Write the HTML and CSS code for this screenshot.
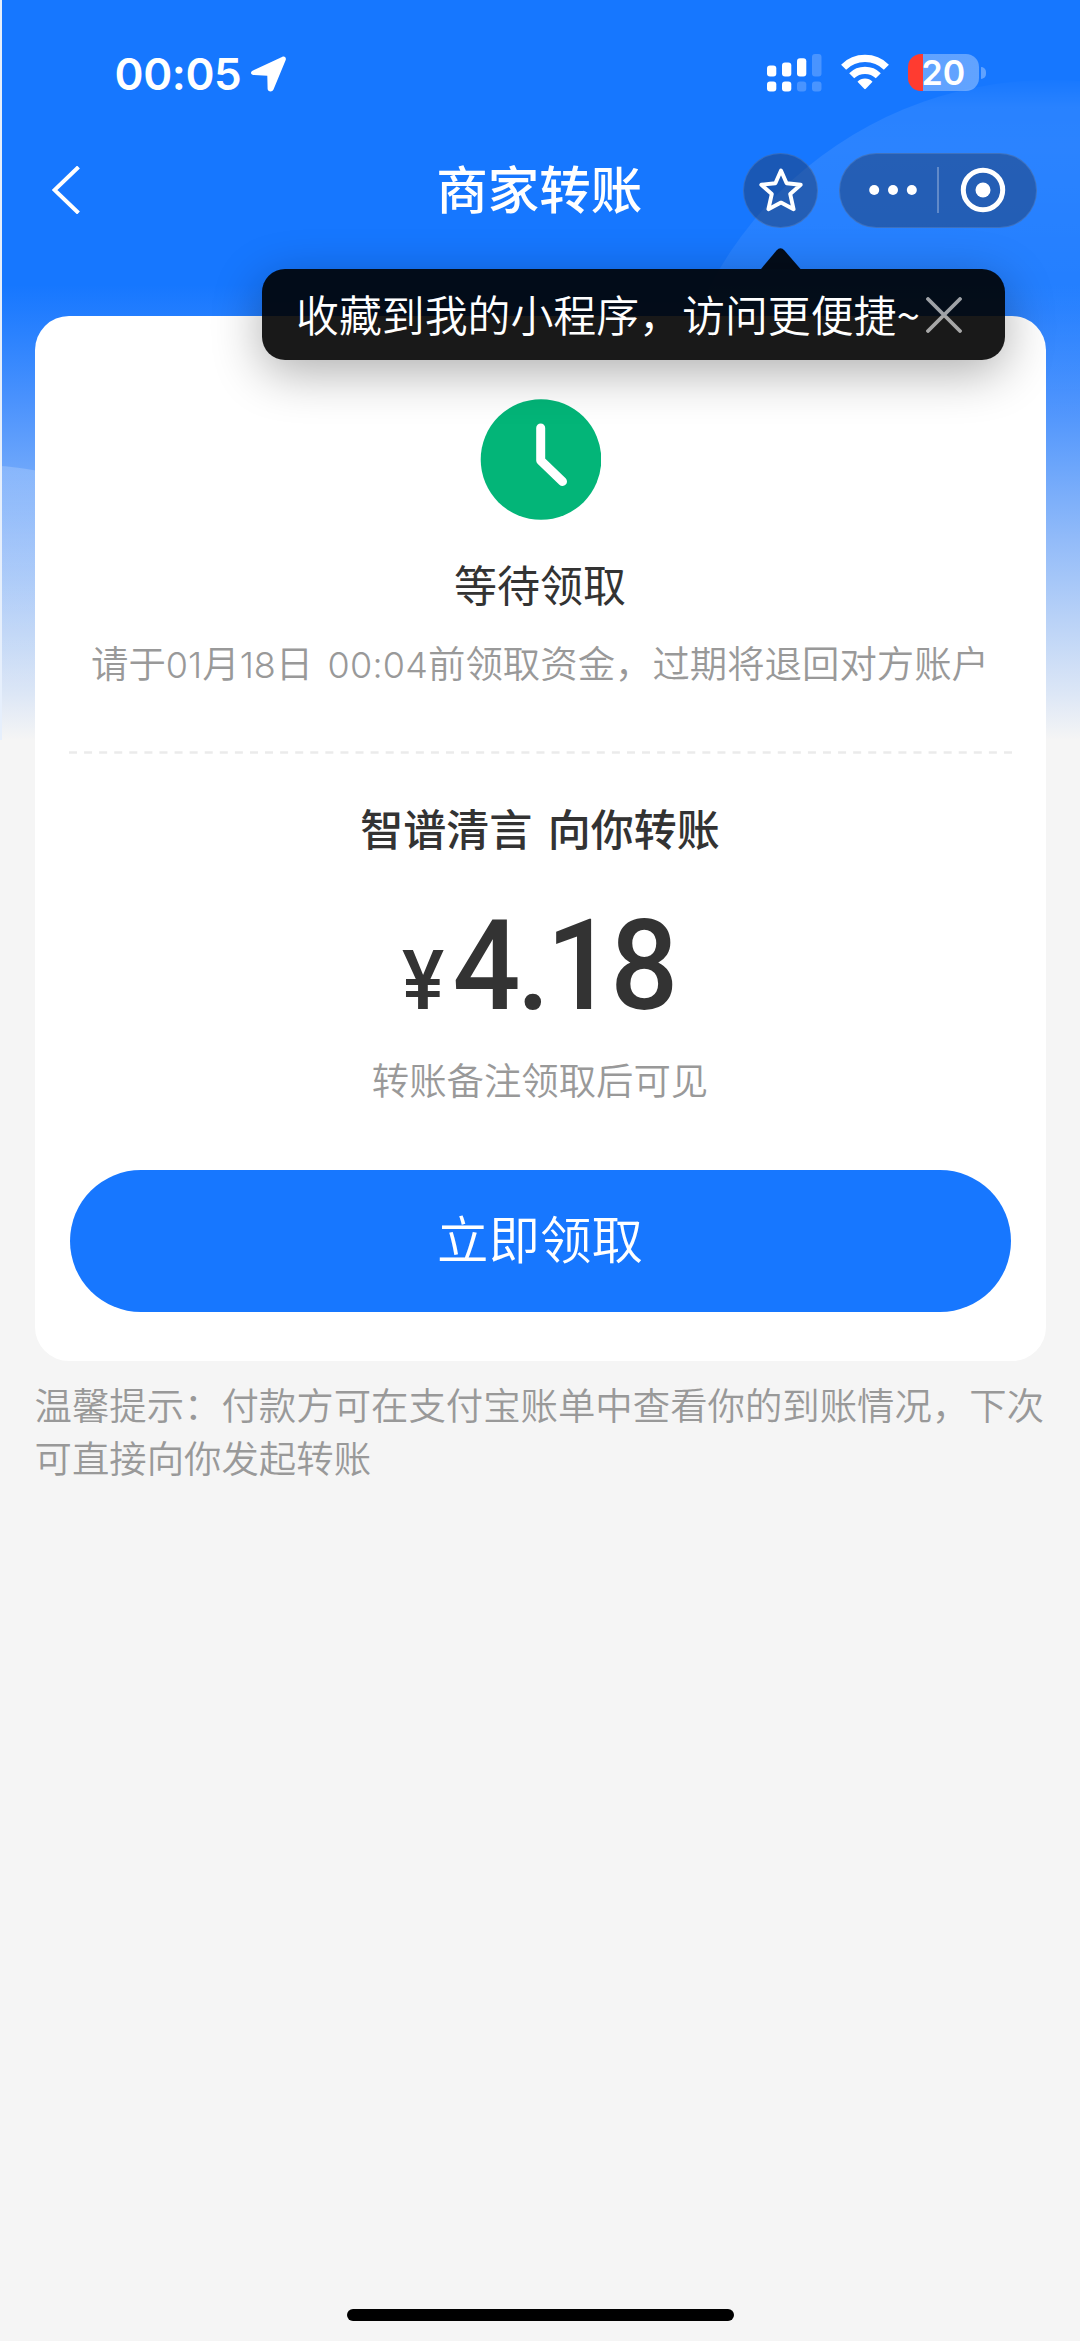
FILE: index.html
```html
<!DOCTYPE html>
<html lang="zh-CN">
<head>
<meta charset="utf-8">
<title>商家转账</title>
<link rel="stylesheet" href="styles.css">
</head>
<body>
<div class="screen">
  <svg class="backdrop" viewBox="0 0 1080 760" aria-hidden="true">
    <defs>
      <linearGradient id="glow" x1="0" y1="76" x2="0" y2="420" gradientUnits="userSpaceOnUse">
        <stop offset="0" stop-color="#fff" stop-opacity="0"/>
        <stop offset=".09" stop-color="#fff" stop-opacity=".08"/>
        <stop offset=".2" stop-color="#fff" stop-opacity=".09"/>
        <stop offset=".6" stop-color="#fff" stop-opacity=".06"/>
        <stop offset="1" stop-color="#fff" stop-opacity="0"/>
      </linearGradient>
      <linearGradient id="wave" x1="0" y1="465" x2="0" y2="700" gradientUnits="userSpaceOnUse">
        <stop offset="0" stop-color="#fff" stop-opacity=".19"/>
        <stop offset="1" stop-color="#fff" stop-opacity="0"/>
      </linearGradient>
    </defs>
    <circle cx="1051" cy="465" r="385" fill="url(#glow)"/>
    <path d="M0 466Q20 467 60 475V760H0Z" fill="url(#wave)"/>
  </svg>

  <header class="status">
    <div class="status-left">
      <span class="time">00:05</span>
      <svg class="locate" viewBox="0 0 35 36"><path d="M2 14.500 31 .9c2.600-1.300 4.500.5 3.700 3.200L22.500 33.500c-1.100 2.900-5.800 2.500-5.900-.7L16.300 19.700 2.600 19C-.5 18.800-1 15.900 2 14.500Z" fill="#fff"/></svg>
    </div>
    <div class="status-right">
      <svg class="signal" viewBox="0 0 55 38" fill="#fff">
        <rect x="0" y="11.500" width="9.300" height="11" rx="3"/>
        <rect x="15" y="8.500" width="9.300" height="14" rx="3"/>
        <rect x="30" y="4.200" width="9.300" height="18.300" rx="3"/>
        <rect x="45" y="0" width="9.500" height="22.500" rx="3" opacity=".22"/>
        <rect x="0" y="27.500" width="9.300" height="10" rx="3"/>
        <rect x="15" y="27.500" width="9.300" height="10" rx="3"/>
        <rect x="30" y="27.500" width="9.300" height="10" rx="3" opacity=".22"/>
        <rect x="45" y="27.500" width="9.500" height="10" rx="3" opacity=".22"/>
      </svg>
      <svg class="wifi" viewBox="0 0 48 36">
        <g fill="none" stroke="#fff" stroke-width="7.200">
          <path d="M2.600 13.200A30.600 30.600 0 0 1 45.400 13.200"/>
          <path d="M10.700 21.800A19 19 0 0 1 37.300 21.800"/>
        </g>
        <path d="M16.500 27.700A10.500 10.500 0 0 1 31.500 27.700L24.800 34.800Q24 35.600 23.200 34.800Z" fill="#fff"/>
      </svg>
      <div class="battery"><span class="level">20</span></div>
    </div>
  </header>

  <nav class="navbar">
    <svg class="back" viewBox="0 0 28 48"><path d="M26.500 1 2.500 24 26.500 47" fill="none" stroke="#fff" stroke-width="4"/></svg>
    <h1 class="title">商家转账</h1>
    <div class="actions">
      <div class="fav">
        <svg viewBox="0 0 46 46"><path d="M23 3.500 28.600 16.200 42.700 17.700 32.200 27 35.600 42.200 23 35.600 10.400 42.200 13.800 27 3.300 17.700 17.400 16.200Z" fill="none" stroke="#fff" stroke-width="3.900" stroke-linejoin="round"/></svg>
        <div class="tooltip">
          <svg class="tip-arrow" viewBox="0 0 40 21"><path d="M0 21 15.500 2.500Q19.500-1.800 23.500 2.500L39.500 21Z"/></svg>
          <span class="tip-text">收藏到我的小程序，访问更便捷~</span>
          <svg class="close" viewBox="0 0 36 36"><path d="M2 2 34 34M34 2 2 34" fill="none" stroke="#fff" stroke-opacity=".62" stroke-width="3.800" stroke-linecap="round"/></svg>
        </div>
      </div>
      <div class="capsule">
        <svg class="dots" viewBox="0 0 48 12" fill="#fff"><circle cx="5.200" cy="6" r="5"/><circle cx="24" cy="6" r="5"/><circle cx="42.800" cy="6" r="5"/></svg>
        <span class="divider"></span>
        <svg class="ring" viewBox="0 0 46 46"><circle cx="23" cy="23" r="19.700" fill="none" stroke="#fff" stroke-width="5"/><circle cx="23" cy="23" r="7.500" fill="#fff"/></svg>
      </div>
    </div>
  </nav>

  <main class="card">
    <svg class="clock" viewBox="0 0 121 121"><circle cx="61" cy="60.500" r="60.300" fill="#03b578"/><path d="M60.700 29V61.500L82.500 82.500" fill="none" stroke="#fff" stroke-width="9" stroke-linecap="round" stroke-linejoin="round"/></svg>
    <p class="state">等待领取</p>
    <p class="deadline">请于<span class="num">01</span>月<span class="num">18</span>日<span class="num clock-time"> 00:04</span>前领取资金，过期将退回对方账户</p>
    <svg class="rule" viewBox="0 0 943 3"><path d="M0 1.500H943" stroke="#ebebeb" stroke-width="2.600" stroke-dasharray="8 7.080"/></svg>
    <h2 class="payer">智谱清言 向你转账</h2>
    <p class="amount"><span class="yen">¥</span><span class="value">4.18</span></p>
    <p class="memo">转账备注领取后可见</p>
    <button class="claim">立即领取</button>
  </main>

  <p class="hint">温馨提示：付款方可在支付宝账单中查看你的到账情况，下次可直接向你发起转账</p>
  <div class="home-bar"></div>
</div>
</body>
</html>
```
FILE: styles.css
```css
* { box-sizing: border-box; }

body {
  margin: 0;
  background: #f5f5f5;
  font-family: "Noto Sans CJK SC", sans-serif;
}

h1, h2, p { margin: 0; }
svg { display: block; flex: none; }

.screen {
  position: relative;
  display: flex;
  flex-direction: column;
  width: 1080px;
  height: 2341px;
  overflow: hidden;
  background: linear-gradient(#1677ff 0, #1677ff 285px, #2d83fe 340px, #4a92fd 400px, #6ba5fb 465px, #92bbf9 540px, #b9d2f7 620px, #dde7f6 695px, #f5f5f5 740px);
}

.backdrop {
  position: absolute;
  top: 0;
  left: 0;
  width: 1080px;
  height: 760px;
}

.screen::before {
  content: "";
  position: absolute;
  z-index: 1;
  width: 1.500px;
  height: 740px;
  background: #e6effc;
}

/* status bar */
.status {
  position: relative;
  display: flex;
  justify-content: space-between;
  height: 150px;
  padding: 53px 94px 0 114.500px;
}
.status-left { display: flex; gap: 8px; }
.time {
  width: 128px;
  font: 600 44px/42px Inter, sans-serif;
  letter-spacing: -0.400px;
  color: #fff;
  white-space: nowrap;
}
.locate { width: 35px; height: 36px; margin-top: 3px; }
.status-right { display: flex; }
.signal { width: 55px; height: 38px; margin-top: 0.500px; }
.wifi { width: 48px; height: 36px; margin: 1px 19px 0 19px; }
.battery {
  position: relative;
  width: 71px;
  height: 37.500px;
  margin: 0.500px 7.500px 0 0;
  border-radius: 13px;
  background: linear-gradient(90deg, #ff3b30 14.500px, rgba(255, 255, 255, .32) 14.500px);
}
.battery::after {
  content: "";
  position: absolute;
  left: 73.500px;
  top: 13px;
  width: 5px;
  height: 12px;
  border-radius: 0 6px 6px 0;
  background: rgba(255, 255, 255, .32);
}
.level {
  display: block;
  padding-left: 14px;
  font: 600 34px/38px Inter, sans-serif;
  color: #fff;
}

/* navigation */
.navbar {
  position: relative;
  z-index: 2;
  display: grid;
  grid-template-columns: 1fr auto 1fr;
  align-items: center;
  height: 80px;
  padding: 0 43px 0 51.500px;
}
.back { width: 28px; height: 48px; }
.title {
  margin-left: -10px;
  padding-bottom: 6px;
  font-size: 51.500px;
  font-weight: 500;
  line-height: 74px;
  color: #fff;
}
.actions { display: flex; justify-content: flex-end; gap: 21px; }
.fav, .capsule {
  height: 75px;
  border: 1px solid rgba(255, 255, 255, .12);
  border-radius: 38px;
  background: rgba(30, 50, 90, .45);
  display: flex;
  align-items: center;
}
.fav { position: relative; width: 75px; justify-content: center; }
.fav > svg { width: 46px; height: 46px; }
.capsule { width: 198px; padding-left: 29px; }
.dots { width: 48px; height: 12px; }
.divider { width: 1.500px; height: 46px; margin-left: 20px; background: rgba(255, 255, 255, .28); }
.ring { width: 46px; height: 46px; margin-left: 21px; }

.tooltip {
  position: absolute;
  top: 115px;
  right: -188px;
  display: flex;
  align-items: center;
  width: 743px;
  height: 91.500px;
  padding: 2px 43px 0 34px;
  border-radius: 23px;
  background: rgba(0, 0, 0, .9);
  box-shadow: 0 12px 50px rgba(0, 0, 0, .32);
}
.tip-arrow {
  position: absolute;
  left: 499px;
  top: -21px;
  width: 40px;
  height: 21px;
  fill: rgba(0, 0, 0, .9);
}
.tip-text {
  padding-bottom: 5px;
  font-size: 42.900px;
  font-weight: 350;
  white-space: nowrap;
  color: #fff;
}
.close { width: 36px; height: 36px; margin-left: auto; }

/* transfer card */
.card {
  position: relative;
  display: flex;
  flex-direction: column;
  align-items: center;
  height: 1045.500px;
  margin: 85.500px 34.500px 0;
  padding: 83.500px 35px 0;
  border-radius: 34px;
  background: #fff;
  color: #333;
}
.clock { width: 121px; height: 121px; }
.state { margin-top: 33px; font-size: 43px; line-height: 60px; }
.deadline, .memo, .hint { font-size: 37.400px; font-weight: 350; color: #999; }
.deadline { margin-top: 24px; line-height: 50px; white-space: nowrap; }
.num { font-family: Inter, sans-serif; font-size: 36px; font-weight: 300; white-space: pre; }
.clock-time { word-spacing: 4px; letter-spacing: 0.200px; }
.rule { width: 943px; height: 3px; margin-top: 61px; }
.payer { margin-top: 43px; font-size: 43px; font-weight: 500; line-height: 60px; word-spacing: 6px; }
.amount {
  display: flex;
  align-items: baseline;
  height: 130px;
  margin: 44px 3px 0 0;
  font-family: Roboto, sans-serif;
  font-weight: 500;
  line-height: 130px;
  transform: scaleX(.945);
}
.yen { font-size: 84px; margin-right: 9px; }
.value { font-size: 126.500px; letter-spacing: -4px; }
.memo { margin-top: 23px; line-height: 50px; }
.claim {
  width: 941px;
  height: 142px;
  margin-top: 65.500px;
  padding: 0 0 9px;
  border: 0;
  border-radius: 71px;
  background: #1777ff;
  color: #fff;
  font-family: inherit;
  font-size: 51.500px;
  font-weight: 350;
}

.hint {
  position: relative;
  width: 1012px;
  margin: 17px 0 0 34.500px;
  line-height: 52.500px;
  color: #999;
}

.home-bar {
  width: 387px;
  height: 12.500px;
  margin: auto auto 20px;
  border-radius: 7px;
  background: #000;
}
```
